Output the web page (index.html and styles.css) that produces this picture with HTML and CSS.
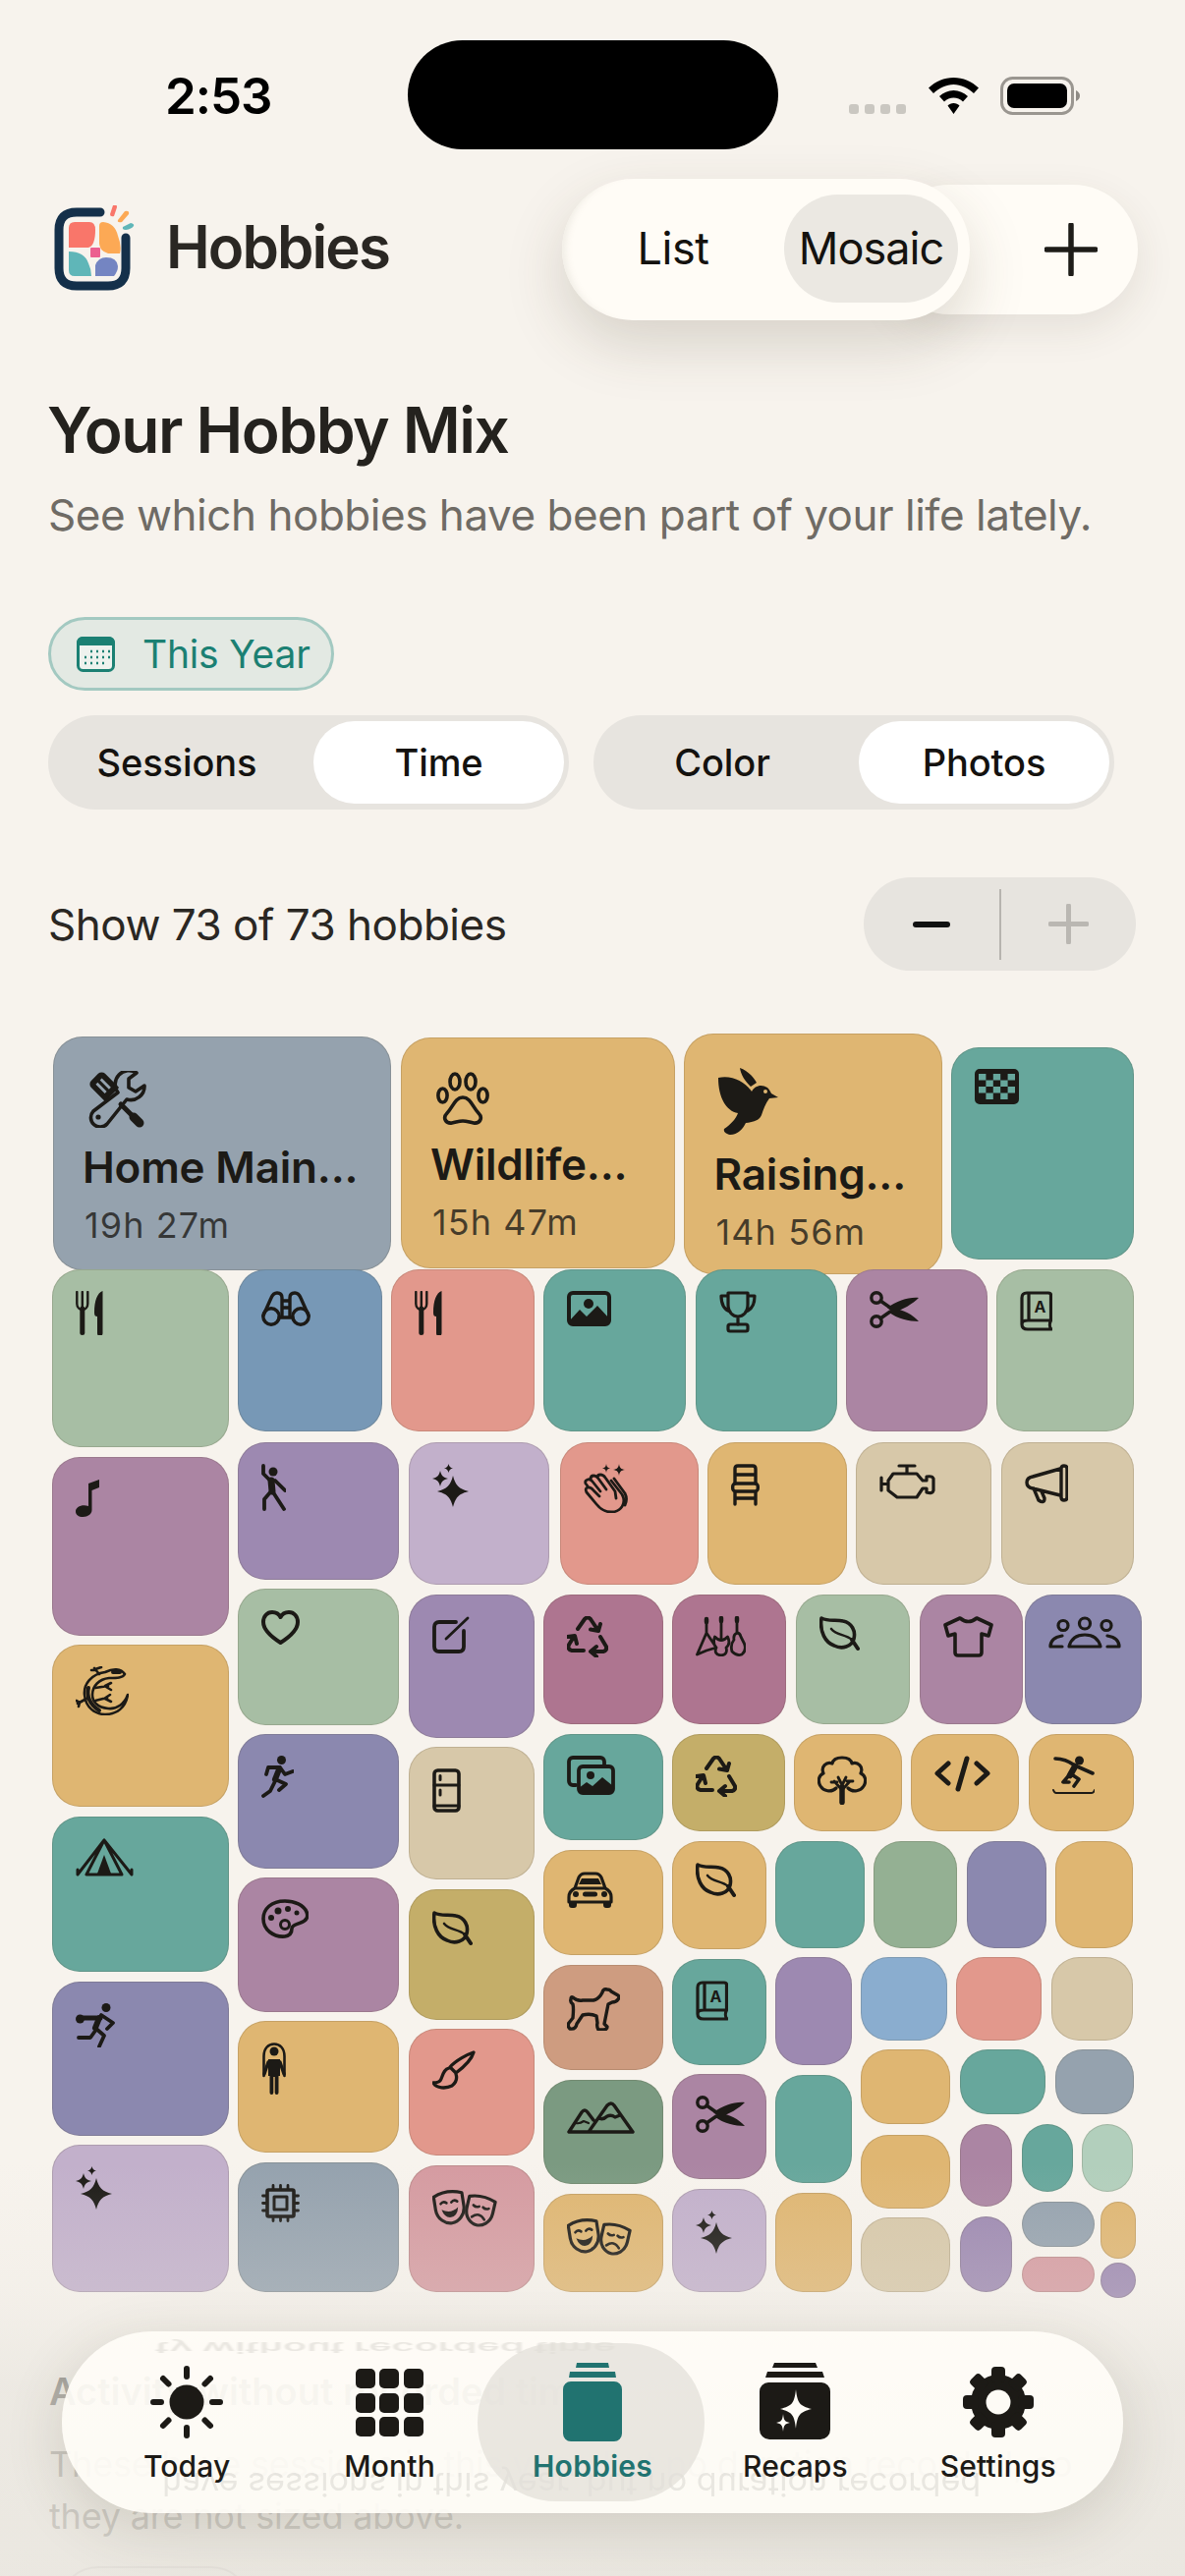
FILE: index.html
```html
<!DOCTYPE html>
<html lang="en">
<head>
<meta charset="utf-8">
<title>Hobbies</title>
<link rel="stylesheet" href="styles.css">
</head>
<body>
<svg class="defs" width="0" height="0" aria-hidden="true">
  <symbol id="tools" viewBox="0 0 60 58">
    <g transform="rotate(-45 18 17)"><path class="fl" fill-rule="evenodd" d="M8 8 a5 5 0 0 1 5-5 h10 a5 5 0 0 1 5 5 v20 h-20z M13.500 9 v13 h2.800 v-13z M19.500 9 v13 h2.800 v-13z" transform="translate(0 -1)"/></g>
    <path class="sl" stroke-width="5" d="M34 34 L46 46"/>
    <path class="sl" stroke-width="9" d="M47 47 L53 53"/>
    <path class="sl" stroke-width="3.600" d="M31 22 L6 41 A9.500 9.500 0 1 0 20 54 L40 29 A14 14 0 0 0 58 15 L49 21 L42 17 L42 8 L50 2 A14 14 0 0 0 31 22Z"/>
    <circle class="fl" cx="11" cy="47" r="2.600"/>
  </symbol>
  <symbol id="paw" viewBox="0 0 56 54">
    <g class="sl" stroke-width="3.600">
      <ellipse cx="7.500" cy="24" rx="4.600" ry="7"/><ellipse cx="20" cy="10" rx="5" ry="8"/><ellipse cx="36" cy="10" rx="5" ry="8"/><ellipse cx="48.500" cy="24" rx="4.600" ry="7"/>
      <path d="M28 26 C20 26 18 36 12 42 C7 47 11 53 17 52 C22 51 24 50 28 50 C32 50 34 51 39 52 C45 53 49 47 44 42 C38 36 36 26 28 26Z"/>
    </g>
  </symbol>
  <symbol id="bird" viewBox="0 0 61 68">
    <path class="fl" fill-rule="evenodd" d="M22 0 C30 3 36 9 39 15 L33 19 C27 13 23 7 22 0Z M0 10 C14 7 27 14 34 24 C37 18 44 16 50 20 C52 22 53 24 54 26 L61 30 L52 31 C48 36 46 42 44 48 C41 55 33 55 28 56 C25 62 20 68 12 68 C8 67 5 65 6 62 C12 58 18 52 20 46 C8 44 0 30 0 10Z M46 24 a2 2 0 1 0 4 0 a2 2 0 1 0 -4 0Z"/>
  </symbol>
  <symbol id="checker" viewBox="0 0 45 36">
    <path class="fl" fill-rule="evenodd" d="M5 0 H40 a5 5 0 0 1 5 5 V31 a5 5 0 0 1 -5 5 H5 a5 5 0 0 1 -5 -5 V5 a5 5 0 0 1 5 -5Z M4 5 v6.500 h7.400 v-6.500z M18.800 5 v6.500 h7.400 v-6.500z M33.600 5 v6.500 h7.400 v-6.500z M11.400 11.500 v6.500 h7.400 v-6.500z M26.200 11.500 v6.500 h7.400 v-6.500z M4 18 v6.500 h7.400 v-6.500z M18.800 18 v6.500 h7.400 v-6.500z M33.600 18 v6.500 h7.400 v-6.500z M11.400 24.500 v6.500 h7.400 v-6.500z M26.200 24.500 v6.500 h7.400 v-6.500z"/>
  </symbol>
  <symbol id="fork" viewBox="0 0 28 45">
    <path class="sl" stroke-width="2.400" d="M1.300 1 V13 C1.300 17 4 19 6.800 19 C9.600 19 12.300 17 12.300 13 V1 M6.800 1 V17"/>
    <path class="sl" stroke-width="5" d="M6.800 18 V42.500"/>
    <path class="fl" d="M27.500 0 C22 2 19 10 19 22 C19 25 20 26 22 26 V43 a2.700 2.700 0 0 0 5.500 0Z"/>
  </symbol>
  <symbol id="binoc" viewBox="0 0 50 36">
    <g class="sl" stroke-width="3.400">
      <circle cx="10" cy="26" r="8.200"/><circle cx="40" cy="26" r="8.200"/>
      <path d="M2 25 L10 7 Q12 2 16 2 Q21 2 21 7 V27 M48 25 L40 7 Q38 2 34 2 Q29 2 29 7 V27 M21 10 H29 M21 17 H29 M18 27 H32"/>
    </g>
  </symbol>
  <symbol id="photo" viewBox="0 0 45 36">
    <rect class="sl" stroke-width="4" x="2" y="2" width="41" height="32" rx="4"/>
    <circle class="fl" cx="22" cy="13" r="5"/>
    <path class="fl" d="M2 31 L13 19 L20 26 L31 15 L43 28 V34 H2Z"/>
  </symbol>
  <symbol id="photos" viewBox="0 0 49 40">
    <path class="sl" stroke-width="3.800" d="M9 30 H6 a4 4 0 0 1 -4 -4 V6 a4 4 0 0 1 4 -4 H34 a4 4 0 0 1 4 4 V9"/>
    <rect class="sl" stroke-width="3.800" x="12" y="11" width="35" height="27" rx="4"/>
    <circle class="fl" cx="24" cy="20" r="4"/>
    <path class="fl" d="M12 33 L20 27 L26 31 L36 22 L47 31 V38 H12Z"/>
  </symbol>
  <symbol id="trophy" viewBox="0 0 38 43">
    <g class="sl" stroke-width="3.200">
      <path d="M9 2 H29 V14 C29 22 24 26 19 26 C14 26 9 22 9 14Z M9 5 H2 C2 14 5 19 11 21 M29 5 H36 C36 14 33 19 27 21 M19 26 V34"/>
      <rect x="9" y="34" width="20" height="7" rx="2"/>
    </g>
  </symbol>
  <symbol id="scissors" viewBox="0 0 50 38">
    <g class="sl" stroke-width="3.400"><circle cx="7" cy="7" r="5.200"/><circle cx="7" cy="31" r="5.200"/><path d="M11 10 L21 17 M11 28 L21 21"/></g>
    <path class="fl" d="M18 17 C28 10 40 6 50 7 C44 13 34 19 24 22Z M25 18 C34 19 44 24 50 31 C40 31 28 28 20 22Z"/>
  </symbol>
  <symbol id="book" viewBox="0 0 33 41">
    <g class="sl" stroke-width="3.200">
      <path d="M7 2 H29 Q31.500 2 31.500 4 V30 H8 Q2 30 2 34 V7 Q2 2 7 2Z M9 2 V29 M2 34 Q2 39 8 39 H32 C30 37 30 33 31.500 30"/>
    </g>
  </symbol>
  <symbol id="dance" viewBox="0 0 25 48">
    <circle class="fl" cx="12" cy="8" r="4.500"/>
    <path class="sl" stroke-width="3.800" d="M2 2 V10 L9 17 M14 17 L24 27 M9 29 L3 36 V46 M12 29 L23 46"/>
    <path class="sl" stroke-width="7" d="M10 17 L11 28"/>
  </symbol>
  <symbol id="sparkles" viewBox="0 0 37 44">
    <path class="fl" d="M21 12 C23.500 22 27 25.500 37 28 C27 30.500 23.500 34 21 44 C18.500 34 15 30.500 5 28 C15 25.500 18.500 22 21 12Z M8 7 C9.300 12 11 13.700 16 15 C11 16.300 9.300 18 8 23 C6.700 18 5 16.300 0 15 C5 13.700 6.700 12 8 7Z M16.500 0 C17.200 2.800 18.200 3.800 21 4.500 C18.200 5.200 17.200 6.200 16.500 9 C15.800 6.200 14.800 5.200 12 4.500 C14.800 3.800 15.800 2.800 16.500 0Z"/>
  </symbol>
  <symbol id="clap" viewBox="0 0 45 50">
    <path class="fl" d="M23 0 C23.400 3 24.400 4 27 4.500 C24.400 5 23.400 6 23 9 C22.600 6 21.600 5 19 4.500 C21.600 4 22.600 3 23 0Z M36 0 C36.600 4 38 5.400 42 6 C38 6.600 36.600 8 36 12 C35.400 8 34 6.600 30 6 C34 5.400 35.400 4 36 0Z"/>
    <g class="sl" stroke-width="2.800">
      <path d="M28 17 L39 31 C44 40 38 49 28 49 C21 49 17 46 13 41 L3 29 Q1 25 4 24 Q7 23 10 27 L16 33 M5 24 L2 20 Q1 17 4 16 Q7 15 9 18 L17 28 M7 16 Q7 12 10 12 Q13 12 15 15 L23 26 M14 14 Q14 11 17 11 Q20 11 22 14 L32 28 L33 35"/>
      <path d="M31 15 L42 30 C44 34 44 38 42 42"/>
    </g>
  </symbol>
  <symbol id="chair" viewBox="0 0 29 43">
    <g class="sl" stroke-width="3.400">
      <path d="M4 20 V5 Q4 2 7 2 H22 Q25 2 25 5 V20 M4 11 H25 M4 41 V29 M25 41 V29 M4 35 H25"/>
      <rect x="1.700" y="20" width="25.600" height="8" rx="3"/>
    </g>
  </symbol>
  <symbol id="engine" viewBox="0 0 57 36">
    <path class="sl" stroke-width="3.200" d="M20 2 H36 M28 2 V9 M9 17 L14 10 H38 L44 17 H48 V13 Q54 12 55 15 V27 Q54 31 48 29 V25 H44 L38 34 H18 L9 27Z M2 14 V27 M2 20.500 H8"/>
  </symbol>
  <symbol id="mega" viewBox="0 0 44 41">
    <path class="sl" stroke-width="3.400" d="M36 5 L8 13 Q2 14 2 19 Q2 24 8 25 L36 32 M40 2 Q43 2 43 5 V34 Q43 37 40 37 Q37 37 37 34 V5 Q37 2 40 2Z M9 25 L14 37 Q20 41 20 35 L17 28"/>
  </symbol>
  <symbol id="music" viewBox="0 0 24 39">
    <path class="fl" d="M13 5 L24 1 V9 L16.500 12 V32 C16.500 36 12.500 39 7.500 39 C3 39 0 37 0 33.500 C0 29 6 26 13 28Z"/>
  </symbol>
  <symbol id="heart" viewBox="0 0 39 36">
    <path class="sl" stroke-width="4" d="M19.500 33 C10 27 2 20 2 12 C2 6 6 2 11 2 C15 2 18 4 19.500 7 C21 4 24 2 28 2 C33 2 37 6 37 12 C37 20 29 27 19.500 33Z"/>
  </symbol>
  <symbol id="pad" viewBox="0 0 38 38">
    <path class="sl" stroke-width="3.800" d="M24 6 H7 Q2 6 2 11 V31 Q2 36 7 36 H27 Q32 36 32 31 V15"/>
    <path class="sl" stroke-width="2.800" d="M14 23 L36 2"/>
  </symbol>
  <symbol id="recycle" viewBox="0 0 42 42">
    <path class="sl" stroke-width="4" d="M11 13 L18 3 Q21 0 24 3 L32 15 M24 13.500 L32 15 L34 8 M17 35 H5 Q0 34 2 29 L7 21 M0.500 21 L8 20 L10 28 M34 21 L40 31 Q41 35 37 36 H24 M30 31 L24 36 L30 41"/>
  </symbol>
  <symbol id="guitars" viewBox="0 0 51 41">
    <g class="sl" stroke-width="2.800">
      <path d="M11 3 V17 M11 17 L1.500 39 L11 35 L21 32 Z M26 2 V22 M19.500 21 Q26 28 32.500 21 Q36 28 31 32 Q33 39 26 40 Q18 39 21 32 Q17 28 19.500 21Z M42 2 V17 M42 17 Q38 19 39 24 Q35 29 37 36 Q42 41 47 39 Q52 35 49.500 28 Q47 23 46 21 Q45 17 42 17Z"/>
    </g>
    <path class="sl" stroke-width="4.500" d="M26 2 V5 M42 2 V5 M11 3 V6"/>
  </symbol>
  <symbol id="leaf" viewBox="0 0 41 36">
    <path class="sl" stroke-width="3.600" d="M2 2 C10 6 16 3 24 5 C33 7 37 15 35 23 C33 31 23 34 15 30 C6 27 0 16 2 2Z"/>
    <path class="sl" stroke-width="2.600" d="M12 13 C18 20 26 18 33 24"/>
    <path class="sl" stroke-width="4" d="M33 24 L39 33"/>
  </symbol>
  <symbol id="tshirt" viewBox="0 0 51 42">
    <path class="sl" stroke-width="3.600" d="M17 2 Q25.500 9 34 2 L49 9 L46 20 L39 18 V37 Q39 40 36 40 H15 Q12 40 12 37 V18 L5 20 L2 9Z"/>
  </symbol>
  <symbol id="people" viewBox="0 0 74 34">
    <g class="sl" stroke-width="3.200">
      <circle cx="37" cy="7.500" r="5.500"/><circle cx="15" cy="9.500" r="5"/><circle cx="59" cy="9.500" r="5"/>
      <path d="M21 31 Q24 19 37 19 Q50 19 53 31Z M2 31 Q2 22 14 20 M14 31 H2 M72 31 Q72 22 60 20 M60 31 H72"/>
    </g>
  </symbol>
  <symbol id="lizard" viewBox="0 0 54 50">
    <path class="sl" stroke-width="2.600" d="M50 8 C46 2 38 2 30 6 C16 8 8 18 9 29 C10 42 20 49 30 49 C42 49 51 42 53 29 C50 38 42 44 33 43 C22 42 17 36 17 29 C17 20 24 13 34 12 C42 12 48 12 50 8Z"/>
    <path class="sl" stroke-width="2.600" d="M24 8 L19 2 M21 4 L16 4 M20 3 L26 1 M11 33 L2 38 M4 37 L0.500 35 M4 37 L3 41 M20 22 L33 20 M30 20 L36 17 M31 21 L36 24 M20 35 L32 32 M29 33 L35 29 M30 33 L36 36"/>
    <path class="sl" stroke-width="4" d="M13 22 C11 30 14 39 24 45 M38 6 L45 6"/>
  </symbol>
  <symbol id="tent" viewBox="0 0 59 40">
    <g class="sl" stroke-width="3">
      <path d="M29 2 L2 37 V32 M29 2 L57 37 V32 M29 2 L11 37 H47Z"/>
    </g>
    <path class="fl" d="M29 17 L22 36 H36Z"/>
  </symbol>
  <symbol id="runner" viewBox="0 0 33 43">
    <circle class="fl" cx="20.500" cy="4.500" r="4.500"/>
    <path class="sl" stroke-width="6" d="M18 14 L14 24"/>
    <path class="sl" stroke-width="3.800" d="M19 12 H7 L5 19 M19 12 L24 19 L32 16 M14 24 L25 29 L18 35 M14 26 L9 36 L2 41"/>
  </symbol>
  <symbol id="bowler" viewBox="0 0 40 45">
    <circle class="fl" cx="31" cy="4.500" r="4.500"/><circle class="fl" cx="4.500" cy="16" r="4.500"/>
    <path class="sl" stroke-width="5" d="M6 15 H25"/>
    <path class="sl" stroke-width="6" d="M24 15 L20 25"/>
    <path class="sl" stroke-width="3.800" d="M26 12 L38 20 L32 26 M21 26 L29 33 L24 44 M20 28 L15 35 H3"/>
  </symbol>
  <symbol id="palette" viewBox="0 0 48 40">
    <path class="sl" stroke-width="3.600" d="M24 2 C10 2 2 10 2 20 C2 31 12 39 24 38 C30 37 31 33 31 30 C31 26 36 26 40 24 C46 22 48 18 46 13 C43 6 34 2 24 2Z"/>
    <circle class="fl" cx="17" cy="12" r="3.500"/><circle class="fl" cx="27" cy="10" r="3"/><circle class="fl" cx="36" cy="14" r="2.500"/><circle class="fl" cx="10" cy="19" r="3"/>
    <circle class="sl" stroke-width="3" cx="24" cy="26" r="4.500"/>
  </symbol>
  <symbol id="fridge" viewBox="0 0 29 45">
    <rect class="sl" stroke-width="3.600" x="2" y="2" width="25" height="41" rx="3.500"/>
    <path class="sl" stroke-width="3" d="M2 17 H27 M2 38 H27 M8 7.500 V11.500 M8 22 V27"/>
  </symbol>
  <symbol id="brush" viewBox="0 0 44 40">
    <g class="sl" stroke-width="3.300">
      <path d="M42 2 C36 4 24 10 18 17 L24 23 C32 17 40 9 42 2Z M17 18 C12 19 11 24 9 29 C8 32 4 33 1 33 C4 39 14 39 20 36 C25 32 25 27 24 24"/>
    </g>
  </symbol>
  <symbol id="rope" viewBox="0 0 26 53">
    <circle class="fl" cx="13" cy="9" r="4.500"/>
    <path class="sl" stroke-width="2.600" d="M2.500 34 V14 C2.500 6 7 1.500 13 1.500 C19 1.500 23.500 6 23.500 14 V34"/>
    <path class="sl" stroke-width="3.400" d="M3 32 L7 20 M23 32 L19 20"/>
    <path class="fl" d="M7 17 H19 V34 H17.500 V51 a1.800 1.800 0 0 1 -3.800 0 V35 H12.300 V51 a1.800 1.800 0 0 1 -3.800 0 V34 H7Z"/>
  </symbol>
  <symbol id="chip" viewBox="0 0 39 39">
    <rect class="sl" stroke-width="3.600" x="6" y="6" width="27" height="27" rx="1.500"/>
    <rect class="sl" stroke-width="3" x="13" y="13" width="13" height="13"/>
    <path class="sl" stroke-width="2.800" d="M12 1.500 V5 M19.500 1.500 V5 M27 1.500 V5 M12 34 V37.500 M19.500 34 V37.500 M27 34 V37.500 M1.500 12 H5 M1.500 19.500 H5 M1.500 27 H5 M34 12 H37.500 M34 19.500 H37.500 M34 27 H37.500"/>
  </symbol>
  <symbol id="masks" viewBox="0 0 66 43">
    <g transform="rotate(-9 17 20)">
      <path class="sl" stroke-width="3.200" d="M3 8 Q17 2 32 8 V21 C32 31 24 37 17.500 37 C11 37 3 31 3 21Z"/>
      <path class="sl" stroke-width="2.600" d="M9 16 q3 -3 6 0 M20 16 q3 -3 6 0"/>
      <path class="fl" d="M9 22 Q17.500 28 26 22 Q24 31 17.500 31 Q11 31 9 22Z"/>
    </g>
    <g transform="translate(33 5) rotate(13 15 18)">
      <path class="sl" stroke-width="3.200" d="M2 7 Q15 2 29 7 V19 C29 29 21 34 15.500 34 C10 34 2 29 2 19Z"/>
      <path class="sl" stroke-width="2.600" d="M8 15 q3 2 6 0 M18 15 q3 2 6 0 M9 27 Q15.500 20 22 27"/>
    </g>
  </symbol>
  <symbol id="code" viewBox="0 0 57 37">
    <path class="sl" stroke-width="5" d="M14 8 L3 18 L14 28 M33 3 L24 34 M43 8 L54 18 L43 28"/>
  </symbol>
  <symbol id="snow" viewBox="0 0 43 39">
    <circle class="fl" cx="27.500" cy="5" r="4.500"/>
    <path class="sl" stroke-width="3.600" d="M3 3 C10 3 16 5 23 10 L41 18 M18 18 L27 24 L22 31 M17 20 L11 27 H17"/>
    <path class="sl" stroke-width="6.500" d="M23 11 L18 20"/>
    <path class="sl" stroke-width="2" d="M1 35 Q2 38 4 38 H40 Q42 38 43 35"/>
  </symbol>
  <symbol id="tree" viewBox="0 0 50 50">
    <path class="sl" stroke-width="3.200" d="M19 33 C14 38 6 36 3 31 C0 26 1 20 6 18 C3 11 9 6 15 8 C16 3 21 2 25 2 C30 2 34 3 35 8 C41 6 47 11 44 18 C49 20 50 26 47 31 C44 36 36 38 31 33"/>
    <path class="sl" stroke-width="5.500" d="M25 47.500 V32"/>
    <path class="sl" stroke-width="2.800" d="M25 35 L17 26 M25 35 L33 26 M25 30 L21 22 M25 30 L29 22 M14 27 H20 M30 26 H36"/>
  </symbol>
  <symbol id="car" viewBox="0 0 47 37">
    <g class="sl" stroke-width="3.200">
      <path d="M8 17 L12 6 Q14 2 18 2 H29 Q33 2 35 6 L39 17 M8 17 Q2 20 2 26 V31 H45 V26 Q45 20 39 17Z"/>
    </g>
    <path class="fl" d="M12 13 L15 7 H32 L35 13Z M2 31 H10 V34 a3 3 0 0 1 -3 3 H5 a3 3 0 0 1 -3 -3Z M37 31 H45 V34 a3 3 0 0 1 -3 3 H40 a3 3 0 0 1 -3 -3Z"/>
    <circle class="fl" cx="9" cy="23" r="3"/><circle class="fl" cx="38" cy="23" r="3"/><rect class="fl" x="16" y="20.500" width="15" height="5" rx="2.500"/>
  </symbol>
  <symbol id="dog" viewBox="0 0 54 45">
    <path class="sl" stroke-width="3.400" d="M6 11 Q10 15 16 14 H27 C32 13 34 10 36 6 Q37 2 41 3 Q44 3 45 5 L52 9 Q54 11 52 13 Q50 16 46 16 L42 18 L38 38 L41 41 Q41 44 37 44 L32 44 Q30 41 31 37 L30 30 Q24 27 16 29 L10 38 Q9 44 3 43 Q0 40 2 37 L6 32 Q7 22 6 18 Q3 16 4 13 Q4 10 6 11Z"/>
  </symbol>
  <symbol id="mount" viewBox="0 0 69 33">
    <path class="sl" stroke-width="3.400" d="M2 31 L15 11 Q18 7 21 11 L27 19 M22 31 L41 4 Q45 0 48 4 L67 31 H2 M32 17 Q37 19 41 15 Q45 13 49 16 L54 14"/>
    <path class="sl" stroke-width="2.200" d="M9 22 Q13 23 17 20 L22 22"/>
  </symbol>
</svg>

<div class="page">
  <div class="status">
    <span class="time">2:53</span>
    <div class="status-right">
      <div class="signal"><i></i><i></i><i></i><i></i></div>
      <svg class="wifi" width="51" height="37" viewBox="0 0 51 37"><path d="M25.500 0 C35 0 44 4 51 10.500 L46 16 C40 10.500 33 7 25.500 7 C18 7 11 10.500 5 16 L0 10.500 C7 4 16 0 25.500 0Z M25.500 13 C31 13 36 15.500 40 19 L35 24.500 C32.500 22 29 20.500 25.500 20.500 C22 20.500 18.500 22 16 24.500 L11 19 C15 15.500 20 13 25.500 13Z M25.500 26 C28 26 30 27 31.500 28.500 L25.500 37 L19.500 28.500 C21 27 23 26 25.500 26Z"/></svg>
      <svg class="battery" width="82" height="39" viewBox="0 0 82 39"><rect class="batt-line" x="1.500" y="1.500" width="72" height="36" rx="11"/><rect x="7" y="7" width="61" height="25" rx="7"/><path class="batt-tip" d="M77 14 Q81 16 81 19.500 Q81 23 77 25Z"/></svg>
    </div>
  </div>
  <div class="island"></div>

  <header class="top">
    <div class="brand">
      <svg class="logo" width="110" height="90" viewBox="0 19 110 90">
        <path class="logo-frame" d="M62 26 H38 Q20 26 20 44 V83 Q20 101 38 101 H70 Q88 101 88 83 V52"/>
        <path class="lg-coral" d="M36 36 H51 Q57 36 57 44 Q57 60 50 62 H30 V42 Q30 36 36 36Z"/>
        <path class="lg-orange" d="M65 36 Q77 37 80 50 Q84 60 82 68 H70 Q62 66 61 58 L61 40 Q61 36 65 36Z"/>
        <rect class="lg-pink" x="52" y="62" width="10" height="10" rx="1"/>
        <path class="lg-teal" d="M30 66 Q46 66 50 78 Q53 84 53 91 H36 Q30 91 30 85Z"/>
        <path class="lg-blue" d="M57 91 V80 Q60 72 68 72 Q79 72 80 81 Q80 86 76 91Z"/>
        <path class="lg-coral" d="M72 28 L75 19 Q79 17 79 21 L76 30 Q72 31 72 28Z"/>
        <path class="lg-orange" d="M80 34 L87 25 Q92 24 91 28 L84 36 Q79 37 80 34Z"/>
        <path class="lg-teal" d="M85 41 L93 37 Q97 38 96 40 Q94 43 88 44 Q84 44 85 41Z"/>
      </svg>
      <span class="brand-name">Hobbies</span>
    </div>
    <div class="top-actions">
      <div class="view-seg">
        <span class="view-opt">List</span>
        <span class="view-opt view-on">Mosaic</span>
      </div>
      <div class="add-cap">
        <svg width="54" height="54" viewBox="0 0 54 54"><path class="add-plus" d="M27 2 V52 M2 27 H52"/></svg>
      </div>
    </div>
  </header>

  <main class="content">
    <h1 class="title">Your Hobby Mix</h1>
    <p class="lead">See which hobbies have been part of your life lately.</p>

    <div class="chip">
      <svg width="39" height="36" viewBox="0 0 39 36">
        <rect class="cal-body" x="1.500" y="1.500" width="36" height="33" rx="5"/>
        <path class="cal-head" d="M6 0 H33 a6 6 0 0 1 6 6 V9 H0 V6 a6 6 0 0 1 6 -6Z"/>
        <path class="cal-dots" d="M14 15 h2 M20 15 h2 M26 15 h2 M32 15 h2 M8 21 h2 M14 21 h2 M20 21 h2 M26 21 h2 M32 21 h2 M8 27 h2 M14 27 h2 M20 27 h2 M26 27 h2"/>
      </svg>
      <span>This Year</span>
    </div>

    <div class="toggles">
      <div class="toggle"><span class="tg-opt tg-left">Sessions</span><span class="tg-opt tg-on">Time</span></div>
      <div class="toggle"><span class="tg-opt tg-left">Color</span><span class="tg-opt tg-on">Photos</span></div>
    </div>

    <div class="show-row">
      <span class="show-text">Show 73 of 73 hobbies</span>
      <div class="stepper">
        <span class="step"><svg width="38" height="6" viewBox="0 0 38 6"><path class="st-minus" d="M3 3 H35"/></svg></span>
        <span class="step-div"></span>
        <span class="step"><svg width="41" height="41" viewBox="0 0 41 41"><path class="st-plus" d="M20.500 2 V39 M2 20.500 H39"/></svg></span>
      </div>
    </div>

    <div class="mosaic">
      <div class="tile big c-slate" style="left:3.5px;top:4.5px;width:344.5px;height:238px"><svg class="ic" width="60" height="58"><use href="#tools"/></svg><b class="tile-name">Home Main...</b><span class="tile-time">19h 27m</span></div>
      <div class="tile big c-sand" style="left:357.5px;top:6px;width:279px;height:234.6px"><svg class="ic" width="56" height="54"><use href="#paw"/></svg><b class="tile-name">Wildlife...</b><span class="tile-time">15h 47m</span></div>
      <div class="tile big c-sand" style="left:646px;top:1.5px;width:262.7px;height:245px"><svg class="ic" width="61" height="68"><use href="#bird"/></svg><b class="tile-name">Raising...</b><span class="tile-time">14h 56m</span></div>
      <div class="tile c-teal" style="left:918.4px;top:15.6px;width:185.6px;height:216px"><svg width="45" height="36"><use href="#checker"/></svg></div>

      <div class="tile c-sage" style="left:3px;top:242px;width:180px;height:181px"><svg width="28" height="45"><use href="#fork"/></svg></div>
      <div class="tile c-steel" style="left:192px;top:242px;width:147px;height:165px"><svg width="50" height="36"><use href="#binoc"/></svg></div>
      <div class="tile c-coral" style="left:348.4px;top:242px;width:145.4px;height:165px"><svg width="28" height="45"><use href="#fork"/></svg></div>
      <div class="tile c-teal" style="left:503.4px;top:242px;width:144.4px;height:165px"><svg width="45" height="36"><use href="#photo"/></svg></div>
      <div class="tile c-teal" style="left:657.5px;top:242px;width:144px;height:165px"><svg width="38" height="43"><use href="#trophy"/></svg></div>
      <div class="tile c-mauve" style="left:811.3px;top:242px;width:143.7px;height:165px"><svg width="50" height="38"><use href="#scissors"/></svg></div>
      <div class="tile c-sage" style="left:964.4px;top:242px;width:139.6px;height:165px"><svg width="33" height="41" viewBox="0 0 33 41"><use href="#book"/><text class="book-a" x="20.500" y="22">A</text></svg></div>

      <div class="tile c-violet" style="left:192px;top:417.5px;width:163.7px;height:140px"><svg width="25" height="48"><use href="#dance"/></svg></div>
      <div class="tile c-lilac" style="left:365.6px;top:417.5px;width:143.9px;height:145px"><svg width="37" height="44"><use href="#sparkles"/></svg></div>
      <div class="tile c-coral" style="left:519.5px;top:417.5px;width:141px;height:145px"><svg width="45" height="50"><use href="#clap"/></svg></div>
      <div class="tile c-sand" style="left:670.2px;top:417.5px;width:141.5px;height:145px"><svg width="29" height="43"><use href="#chair"/></svg></div>
      <div class="tile c-beige" style="left:821.4px;top:417.5px;width:137.2px;height:145px"><svg width="57" height="36"><use href="#engine"/></svg></div>
      <div class="tile c-beige" style="left:968.6px;top:417.5px;width:135.4px;height:145px"><svg width="44" height="41"><use href="#mega"/></svg></div>

      <div class="tile c-mauve" style="left:3px;top:433px;width:180px;height:181.5px"><svg width="24" height="39"><use href="#music"/></svg></div>
      <div class="tile c-sand" style="left:3px;top:624.4px;width:180px;height:164.6px"><svg width="54" height="50"><use href="#lizard"/></svg></div>
      <div class="tile c-teal" style="left:3px;top:799.4px;width:180px;height:158px"><svg width="59" height="40"><use href="#tent"/></svg></div>
      <div class="tile c-indigo" style="left:3px;top:967px;width:180px;height:156.5px"><svg width="40" height="45"><use href="#bowler"/></svg></div>
      <div class="tile c-lilac" style="left:3px;top:1133px;width:180px;height:150px"><svg width="37" height="44"><use href="#sparkles"/></svg></div>

      <div class="tile c-sage" style="left:192px;top:567px;width:163.7px;height:138.6px"><svg width="39" height="36"><use href="#heart"/></svg></div>
      <div class="tile c-indigo" style="left:192px;top:715.4px;width:163.7px;height:136.2px"><svg width="33" height="43"><use href="#runner"/></svg></div>
      <div class="tile c-mauve" style="left:192px;top:861.4px;width:163.7px;height:136.2px"><svg width="48" height="40"><use href="#palette"/></svg></div>
      <div class="tile c-sand" style="left:192px;top:1007.4px;width:163.7px;height:133.9px"><svg width="26" height="53"><use href="#rope"/></svg></div>
      <div class="tile c-slate" style="left:192px;top:1151px;width:163.7px;height:132px"><svg width="39" height="39"><use href="#chip"/></svg></div>

      <div class="tile c-violet" style="left:365.6px;top:572.5px;width:128.2px;height:146px"><svg width="38" height="38"><use href="#pad"/></svg></div>
      <div class="tile c-beige" style="left:365.6px;top:728.4px;width:128.2px;height:134.6px"><svg width="29" height="45"><use href="#fridge"/></svg></div>
      <div class="tile c-olive" style="left:365.6px;top:873px;width:128.2px;height:132.6px"><svg width="41" height="36"><use href="#leaf"/></svg></div>
      <div class="tile c-coral" style="left:365.6px;top:1015.4px;width:128.2px;height:129px"><svg width="44" height="40"><use href="#brush"/></svg></div>
      <div class="tile c-pink" style="left:365.6px;top:1154.3px;width:128.2px;height:128.7px"><svg width="66" height="43"><use href="#masks"/></svg></div>

      <div class="tile c-rose" style="left:503.4px;top:572.5px;width:121.2px;height:132.2px"><svg width="42" height="42"><use href="#recycle"/></svg></div>
      <div class="tile c-teal" style="left:503.4px;top:714.5px;width:121.2px;height:108.5px"><svg width="49" height="40"><use href="#photos"/></svg></div>
      <div class="tile c-sand" style="left:503.4px;top:833.3px;width:121.2px;height:107px"><svg width="47" height="37"><use href="#car"/></svg></div>
      <div class="tile c-clay" style="left:503.4px;top:950.3px;width:121.2px;height:107px"><svg width="54" height="45"><use href="#dog"/></svg></div>
      <div class="tile c-moss" style="left:503.4px;top:1067.2px;width:121.2px;height:106.3px"><svg width="69" height="33"><use href="#mount"/></svg></div>
      <div class="tile c-sand" style="left:503.4px;top:1183.3px;width:121.2px;height:99.7px"><svg width="66" height="43"><use href="#masks"/></svg></div>

      <div class="tile c-rose" style="left:634.3px;top:572.5px;width:115.5px;height:132.5px"><svg width="51" height="41"><use href="#guitars"/></svg></div>
      <div class="tile c-sage" style="left:759.5px;top:572.5px;width:116.4px;height:132.5px"><svg width="41" height="36"><use href="#leaf"/></svg></div>
      <div class="tile c-mauve" style="left:885.5px;top:572.5px;width:105.2px;height:132.5px"><svg width="51" height="42"><use href="#tshirt"/></svg></div>
      <div class="tile c-indigo" style="left:992.6px;top:572.5px;width:119px;height:132.5px"><svg width="74" height="34"><use href="#people"/></svg></div>

      <div class="tile c-olive" style="left:634.3px;top:714.5px;width:114.7px;height:99.2px"><svg width="42" height="42"><use href="#recycle"/></svg></div>
      <div class="tile c-sand" style="left:758.3px;top:714.5px;width:109.4px;height:99.2px"><svg width="50" height="50"><use href="#tree"/></svg></div>
      <div class="tile c-sand" style="left:877.4px;top:714.5px;width:109.8px;height:99.2px"><svg width="57" height="37"><use href="#code"/></svg></div>
      <div class="tile c-sand" style="left:996.5px;top:714.5px;width:107px;height:99.2px"><svg width="43" height="39"><use href="#snow"/></svg></div>

      <div class="tile c-sand" style="left:634.3px;top:823.5px;width:95.4px;height:110px"><svg width="41" height="36"><use href="#leaf"/></svg></div>
      <div class="tile c-teal" style="left:739.4px;top:823.5px;width:90.5px;height:109px"></div>
      <div class="tile c-fern" style="left:839.1px;top:823.5px;width:85.1px;height:109px"></div>
      <div class="tile c-indigo" style="left:933.5px;top:823.5px;width:81.5px;height:109px"></div>
      <div class="tile c-sand" style="left:1024.3px;top:823.5px;width:79.2px;height:109px"></div>

      <div class="tile c-teal" style="left:634.3px;top:943.6px;width:95.4px;height:108.4px"><svg width="33" height="41" viewBox="0 0 33 41"><use href="#book"/><text class="book-a" x="20.500" y="22">A</text></svg></div>
      <div class="tile c-mauve" style="left:634.3px;top:1061.4px;width:95.4px;height:106.3px"><svg width="50" height="38"><use href="#scissors"/></svg></div>
      <div class="tile c-lilac" style="left:634.3px;top:1177.5px;width:95.4px;height:105.5px"><svg width="37" height="44"><use href="#sparkles"/></svg></div>

      <div class="tile c-violet" style="left:739.4px;top:942.2px;width:77.3px;height:110.3px"></div>
      <div class="tile c-teal" style="left:739.4px;top:1062.3px;width:77.3px;height:109.4px"></div>
      <div class="tile c-sand" style="left:739.4px;top:1181.5px;width:77.3px;height:101.5px"></div>

      <div class="tile c-sky" style="left:826.4px;top:942.2px;width:87.3px;height:84.4px"></div>
      <div class="tile c-coral" style="left:923.4px;top:942.2px;width:86.6px;height:84.4px"></div>
      <div class="tile c-beige" style="left:1019.7px;top:942.2px;width:83.8px;height:84.4px"></div>

      <div class="tile c-sand" style="left:826.4px;top:1036.4px;width:90.3px;height:75.9px"></div>
      <div class="tile c-sand" style="left:826.4px;top:1122.6px;width:90.3px;height:75px"></div>
      <div class="tile c-beige" style="left:826.4px;top:1207.4px;width:90.3px;height:75.6px"></div>

      <div class="tile c-teal" style="left:926.5px;top:1036.4px;width:87.4px;height:66.1px"></div>
      <div class="tile c-slate" style="left:1023.5px;top:1036.4px;width:80px;height:66.1px"></div>
      <div class="tile c-mauve" style="left:926.5px;top:1112.3px;width:53.7px;height:83.5px"></div>
      <div class="tile c-violet" style="left:926.5px;top:1205.6px;width:53.7px;height:77.4px"></div>
      <div class="tile c-teal" style="left:989.5px;top:1112.3px;width:52.5px;height:69.2px"></div>
      <div class="tile c-mint" style="left:1051.4px;top:1112.3px;width:52.1px;height:69.2px"></div>
      <div class="tile c-slate" style="left:989.5px;top:1190.9px;width:74.5px;height:46.4px"></div>
      <div class="tile c-pink" style="left:989.5px;top:1247px;width:74.5px;height:36px"></div>
      <div class="tile c-sand" style="left:1070.3px;top:1190.9px;width:35.6px;height:58.5px"></div>
      <div class="tile c-violet" style="left:1070.3px;top:1253px;width:35.6px;height:36px"></div>
    </div>

    <section class="after">
      <h2 class="after-title">Activity without recorded time</h2>
      <p class="after-text">These have sessions in this year, but no duration recorded, so<br>they are not sized above.</p>
      <div class="after-pill"></div>
    </section>
  </main>
</div>

<div class="fade"></div>

<nav class="tabbar">
  <span class="mirror mirror-top">ty without recorded time</span>
  <span class="mirror mirror-bottom">have sessions in this year, but no duration recorded</span>
  <div class="tab">
    <svg class="tab-icon" width="74" height="74" viewBox="-37 -37 74 74">
      <circle class="fl" r="17.500"/>
      <path class="tab-ray" d="M0 -34 V-26 M0 34 V26 M-34 0 H-26 M34 0 H26 M-24 -24 L-18.500 -18.500 M24 -24 L18.500 -18.500 M-24 24 L-18.500 18.500 M24 24 L18.500 18.500"/>
    </svg>
    <span>Today</span>
  </div>
  <div class="tab">
    <div class="month-grid"><i></i><i></i><i></i><i></i><i></i><i></i><i></i><i></i><i></i></div>
    <span>Month</span>
  </div>
  <div class="tab tab-on">
    <svg class="tab-jar" width="60" height="80" viewBox="0 0 60 80">
      <path class="jar-teal" d="M14 0 H46 L47 5 H13Z M7 9 H53 L54 15 H6Z M8 19 H52 a8 8 0 0 1 8 8 V72 a8 8 0 0 1 -8 8 H8 a8 8 0 0 1 -8 -8 V27 a8 8 0 0 1 8 -8Z"/>
    </svg>
    <span>Hobbies</span>
  </div>
  <div class="tab">
    <svg class="tab-jar" width="72" height="80" viewBox="0 0 72 80">
      <path class="fl" d="M15 0 H57 L59 5 H13Z M8 9 H64 L66 15 H6Z M9 20 H63 a9 9 0 0 1 9 9 V68 a10 10 0 0 1 -10 10 H10 a10 10 0 0 1 -10 -10 V29 a9 9 0 0 1 9 -9Z"/>
      <path class="spark" d="M37 27 C38.500 41 41 44 53 47 C41 50 38.500 53 37 67 C35.500 53 33 50 21 47 C33 44 35.500 41 37 27Z M24 52 C24.700 58.500 25.700 60 31 61 C25.700 62 24.700 63.500 24 70 C23.300 63.500 22.300 62 17 61 C22.300 60 23.300 58.500 24 52Z"/>
    </svg>
    <span>Recaps</span>
  </div>
  <div class="tab">
    <svg class="tab-icon" width="74" height="74" viewBox="-37 -37 74 74">
      <circle class="fl" r="28"/>
      <g class="fl">
        <rect x="-7" y="-36" width="14" height="16" rx="4"/>
        <rect x="-7" y="-36" width="14" height="16" rx="4" transform="rotate(45)"/>
        <rect x="-7" y="-36" width="14" height="16" rx="4" transform="rotate(90)"/>
        <rect x="-7" y="-36" width="14" height="16" rx="4" transform="rotate(135)"/>
        <rect x="-7" y="-36" width="14" height="16" rx="4" transform="rotate(180)"/>
        <rect x="-7" y="-36" width="14" height="16" rx="4" transform="rotate(225)"/>
        <rect x="-7" y="-36" width="14" height="16" rx="4" transform="rotate(270)"/>
        <rect x="-7" y="-36" width="14" height="16" rx="4" transform="rotate(315)"/>
      </g>
      <circle class="gear-hole" r="12.500"/>
    </svg>
    <span>Settings</span>
  </div>
</nav>
</body>
</html>
```
FILE: styles.css
```css
* { box-sizing: border-box; }
html, body { margin: 0; padding: 0; }
body {
  width: 1206px;
  height: 2622px;
  overflow: hidden;
  position: relative;
  background: #f7f3ed;
  color: #23211d;
  font-family: Inter, "Liberation Sans", sans-serif;
}
.defs { position: absolute; }
.fl { fill: currentColor; }
.sl { fill: none; stroke: currentColor; stroke-linecap: round; stroke-linejoin: round; }
.book-a { font: 700 16px Inter, sans-serif; fill: currentColor; text-anchor: middle; }

/* status bar */
.status { height: 182px; padding: 65px 106px 0 168px; display: flex; align-items: flex-start; }
.time { font-size: 51px; line-height: 66px; font-weight: 600; color: #000; letter-spacing: -1px; }
.status-right { margin-left: auto; display: flex; align-items: flex-end; margin-top: 13px; height: 39px; }
.signal { display: flex; gap: 6px; margin-right: 23px; margin-bottom: 1px; }
.signal i { width: 10px; height: 10px; border-radius: 3px; background: #cac7c1; }
.wifi { fill: #000; margin-bottom: 1px; margin-right: 22px; }
.battery { fill: #000; }
.batt-line { fill: none; stroke: #9a9690; stroke-width: 3; }
.batt-tip { fill: #8f8b85; }
.island { position: absolute; left: 415px; top: 41px; width: 376.5px; height: 111px; border-radius: 56px; background: #000; }

/* header */
.top { height: 144px; padding: 0 48px 0 40px; display: flex; align-items: center; }
.brand { display: flex; align-items: center; gap: 19px; }
.logo-frame { fill: none; stroke: #14304a; stroke-width: 9; stroke-linecap: round; }
.lg-coral { fill: #f9766a; }
.lg-orange { fill: #fca955; }
.lg-pink { fill: #ec5f90; }
.lg-teal { fill: #5fb6b8; }
.lg-blue { fill: #7485c2; }
.brand-name { margin-bottom: 6px; font-size: 60px; font-weight: 600; letter-spacing: -1.9px; color: #2a2723; }
.top-actions { margin-left: auto; display: flex; align-items: center; }
.view-seg {
  position: relative;
  z-index: 2;
  width: 415px;
  height: 144px;
  padding: 15.5px 12px 18px 0;
  display: flex;
  align-items: stretch;
  border-radius: 72px;
  background: #fffcf6;
  box-shadow: inset 11px 0 6px -7px rgba(240, 236, 228, .9), 0 24px 60px rgba(70, 60, 40, .18);
}
.view-opt { display: flex; align-items: center; justify-content: center; width: 226px; font-size: 45px; color: #14120f; letter-spacing: -.5px; }
.view-on { width: 177px; border-radius: 55px; background: #ebe8e2; letter-spacing: -1px; }
.add-cap {
  width: 258px;
  height: 132px;
  margin-left: -87px;
  padding-left: 163px;
  display: flex;
  align-items: center;
  border-radius: 66px;
  background: #fffcf6;
  box-shadow: 0 14px 40px rgba(70, 60, 40, .1);
}
.add-plus { fill: none; stroke: #1e1c18; stroke-width: 5.500; stroke-linecap: round; }

/* page content */
.content { padding: 0 50px; }
.title { margin: 75px 0 0 -2px; font-size: 64px; line-height: 74px; font-weight: 600; letter-spacing: -1.500px; color: #24221e; }
.lead { margin: 23px 0 0 -1px; font-size: 44px; line-height: 52px; color: #6f6b65; letter-spacing: -.47px; }
.chip {
  width: 291px;
  height: 75px;
  margin: 78px 0 0 -1px;
  padding-left: 26px;
  display: flex;
  align-items: center;
  gap: 28px;
  border: 3px solid #a3c9c1;
  border-radius: 38px;
  background: #e3e9e3;
  color: #1b8073;
  font-size: 39px;
  letter-spacing: -.2px;
}
.cal-body { fill: #eef2ee; stroke: #1b8073; stroke-width: 3; }
.cal-head { fill: #1b8073; }
.cal-dots { fill: none; stroke: #1b8073; stroke-width: 2.500; }
.toggles { display: flex; gap: 25px; margin: 25px 0 0 -1px; }
.toggle { width: 530px; height: 96px; padding: 6px 5px 6px 0; display: flex; border-radius: 48px; background: #e7e4df; }
.tg-opt { display: flex; align-items: center; justify-content: center; font-size: 38px; font-weight: 500; color: #14120f; letter-spacing: -.1px; }
.tg-left { flex: 1; padding-right: 8px; }
.tg-on { width: 255px; border-radius: 42px; background: #fff; }
.show-row { display: flex; align-items: center; justify-content: space-between; margin: 69px 0 0; height: 95px; }
.show-text { margin-left: -1px; font-size: 44px; color: #2a2723; letter-spacing: -.48px; }
.stepper { width: 277px; height: 95px; display: flex; align-items: center; border-radius: 48px; background: #e7e4df; }
.step { flex: 1; display: flex; align-items: center; justify-content: center; }
.step-div { width: 2px; height: 72px; background: #b7b4af; }
.st-minus { fill: none; stroke: #111; stroke-width: 6; stroke-linecap: round; }
.st-plus { fill: none; stroke: #bab7b2; stroke-width: 5; stroke-linecap: round; }

/* mosaic: tiles sit on a free canvas, sized from hobby totals */
.mosaic { position: relative; height: 1290px; margin-top: 62px; }
.tile {
  position: absolute;
  padding: 21px 0 0 23px;
  overflow: hidden;
  border-radius: 28px;
  border: 1.5px solid rgba(70, 55, 30, .16);
  color: #1c1a16;
}
.tile svg { display: block; }
.big { display: flex; flex-direction: column; align-items: flex-start; padding: 34px 0 0 29.5px; border-radius: 30px; }
.ic { margin-left: 4.5px; }
.tile-name { margin-top: 12px; font-size: 44px; line-height: 56px; font-weight: 600; white-space: nowrap; letter-spacing: -.2px; }
.tile-time { margin: 10px 0 0 2px; font-size: 36px; line-height: 42px; color: rgba(28, 26, 22, .78); white-space: nowrap; letter-spacing: 1.100px; }
.c-slate { background: #95a2ae; }
.c-sand { background: #dfb672; }
.c-teal { background: #67a79c; }
.c-sage { background: #a7bea4; }
.c-steel { background: #7798b6; }
.c-coral { background: #e2988c; }
.c-violet { background: #9d89b1; }
.c-lilac { background: #c2b0cb; }
.c-mauve { background: #ab85a3; }
.c-rose { background: #ae7590; }
.c-beige { background: #d7c8a9; }
.c-indigo { background: #8b88af; }
.c-olive { background: #c4ae69; }
.c-clay { background: #ce9c80; }
.c-moss { background: #7b9a81; }
.c-pink { background: #d59ba1; }
.c-fern { background: #94b093; }
.c-sky { background: #8aadcf; }
.c-mint { background: #b2cfbc; }

/* section under the mosaic */
.after { margin-top: 71px; }
.after-title { margin: 0; font-size: 38px; line-height: 46px; font-weight: 600; color: #2a2723; }
.after-text { margin: 25px 0 0; font-size: 36px; line-height: 53px; color: #6f6b65; white-space: nowrap; letter-spacing: -.2px; }
.after-pill { width: 195px; height: 80px; margin: 24px 0 0 10px; border: 2px solid #cfc9c6; border-radius: 40px; }

.fade {
  position: absolute;
  left: 0;
  right: 0;
  bottom: 0;
  height: 420px;
  background: linear-gradient(to bottom,
    rgba(232, 229, 222, 0) 0,
    rgba(232, 229, 222, .22) 130px,
    rgba(232, 229, 222, .7) 230px,
    rgba(232, 229, 222, .82) 100%);
}

/* floating tab bar */
.tabbar {
  position: absolute;
  left: 63px;
  right: 63px;
  top: 2373px;
  height: 185px;
  padding: 32px 24px 0;
  display: flex;
  overflow: hidden;
  border-radius: 92px;
  background: rgba(255, 253, 247, .9);
  box-shadow: 0 16px 60px rgba(70, 60, 40, .16);
}
.mirror {
  position: absolute;
  font-size: 36px;
  line-height: 1;
  white-space: nowrap;
  color: rgba(60, 55, 45, .1);
  filter: blur(.8px);
  transform-origin: left top;
}
.mirror-top { left: 95px; top: 24px; font-weight: 600; transform: scale(1.1, -.42); }
.mirror-bottom { left: 102px; top: 172px; transform: scale(.95, -.9); }
.tab {
  position: relative;
  flex: 1;
  display: flex;
  flex-direction: column;
  align-items: center;
  color: #1c1a16;
  font-size: 30px;
  font-weight: 500;
  letter-spacing: .15px;
}
.tab > svg, .tab > .month-grid { flex: none; }
.tab-jar { margin-bottom: 7px; }
.tab-icon { margin-top: 3px; margin-bottom: 10px; }
.tab > span { position: relative; line-height: 36px; }
.tab-on { color: #217370; font-weight: 600; letter-spacing: .3px; }
.tab-on::before {
  content: "";
  position: absolute;
  left: -14px;
  right: -11px;
  top: -20px;
  bottom: 12px;
  border-radius: 80px;
  background: rgba(226, 223, 216, .72);
}
.tab-on > svg { position: relative; }
.jar-teal { fill: #217370; }
.tab-ray { fill: none; stroke: currentColor; stroke-width: 6; stroke-linecap: round; }
.spark { fill: #fffdf7; }
.gear-hole { fill: #fdfbf5; }
.month-grid { width: 70px; height: 80px; margin-bottom: 7px; padding-top: 6px; display: grid; grid-template-columns: repeat(3, 20px); grid-auto-rows: 20px; gap: 4.500px; }
.month-grid i { border-radius: 5px; background: #1c1a16; }
```
